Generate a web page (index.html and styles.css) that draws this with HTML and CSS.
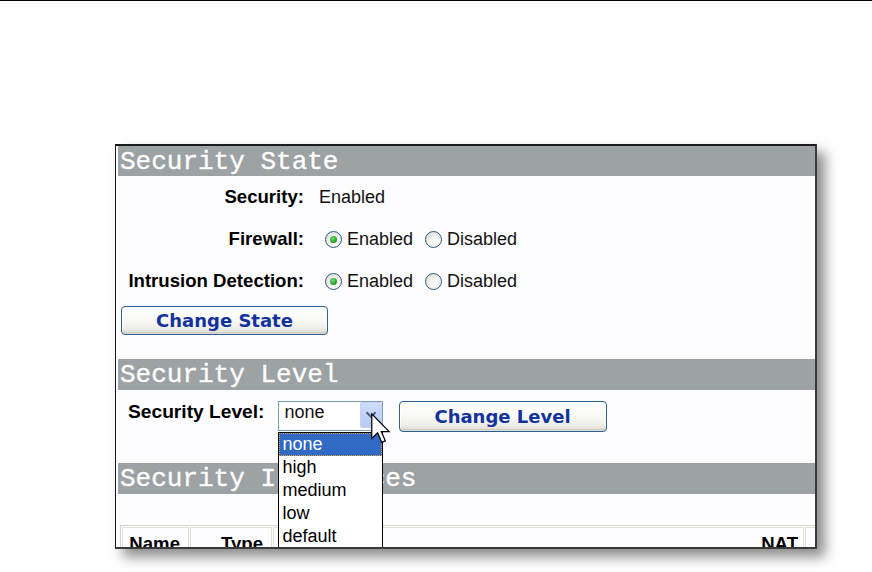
FILE: index.html
```html
<!DOCTYPE html>
<html>
<head>
<meta charset="utf-8">
<title>Security</title>
<link rel="stylesheet" href="styles.css">
</head>
<body>
<div class="topline"></div>
<div class="frame">
  <div class="sect-head">Security State</div>
  <div class="state-grid">
    <div class="lbl">Security:</div>
    <div class="val">Enabled</div>
    <div class="lbl">Firewall:</div>
    <div class="val"><span class="radio on"></span>Enabled<span class="radio second"></span>Disabled</div>
    <div class="lbl">Intrusion Detection:</div>
    <div class="val"><span class="radio on"></span>Enabled<span class="radio second"></span>Disabled</div>
  </div>
  <div class="btn-row"><button class="btn btn-state">Change State</button></div>

  <div class="sect-head h2">Security Level</div>
  <div class="level-row">
    <span class="lbl level-lbl">Security Level:</span>
    <div class="select-wrap">
      <div class="select">none<span class="arrow"><svg width="22" height="26" viewBox="0 0 22 26"><path d="M6 10 L11 15 L16 10" fill="none" stroke="#4d6185" stroke-width="2.4"/></svg></span></div>
      <ul class="dropdown">
        <li class="sel">none</li>
        <li>high</li>
        <li>medium</li>
        <li>low</li>
        <li>default</li>
      </ul>
    </div>
    <button class="btn btn-level">Change Level</button>
  </div>

  <div class="sect-head h3">Security Interfaces</div>
  <table class="ifaces">
    <tr>
      <th class="c-name">Name</th>
      <th class="c-type">Type</th>
      <th class="c-nat">NAT</th>
      <th class="c-last">&nbsp;</th>
    </tr>
    <tr><td>lan</td><td>internal</td><td>yes</td><td></td></tr>
  </table>
</div>
<svg class="cursor" width="20" height="31" viewBox="0 0 13 20"><path d="M0.5 0.5 L0.5 16.5 L4.3 12.8 L7 19 L9.3 18 L6.7 12 L11.8 12 Z" fill="#fff" stroke="#000" stroke-width="0.8" stroke-linejoin="miter"/></svg>
</body>
</html>
```
FILE: styles.css
```css
html, body {
  margin: 0;
  padding: 0;
  background: #fff;
}
body {
  width: 872px;
  height: 572px;
  position: relative;
  overflow: hidden;
  font-family: "Liberation Sans", Arial, sans-serif;
}
.topline {
  height: 1px;
  background: #000;
}
.frame {
  position: relative;
  box-sizing: border-box;
  margin: 143px 0 0 115px;
  width: 702px;
  height: 405px;
  border-top: 2px solid #1a1a1a;
  border-left: 1px solid #1a1a1a;
  border-right: 2px solid #3a3a3a;
  border-bottom: 2px solid #3a3a3a;
  background: #fdfcff;
  box-shadow: 8px 8px 12px rgba(0, 0, 0, 0.45);
  overflow: hidden;
}
.sect-head {
  height: 30px;
  margin-left: 2px;
  padding-left: 2px;
  background: #9da2a5;
  color: #fff;
  font-family: "Liberation Mono", "Courier New", monospace;
  font-size: 26px;
  line-height: 32px;
  white-space: nowrap;
  overflow: hidden;
  -webkit-text-stroke: 0.5px #fff;
  text-shadow: 0 0 1px rgba(90, 95, 98, 0.7);
}
.sect-head.h2 {
  height: 31px;
  margin-top: 24px;
}
.sect-head.h3 {
  height: 31px;
  margin-top: 31px;
}
.state-grid {
  display: grid;
  grid-template-columns: 188px auto;
  grid-auto-rows: 42px;
  column-gap: 15px;
  align-items: center;
}
.lbl {
  font-weight: bold;
  font-size: 18.6px;
  color: #000;
  text-align: right;
  white-space: nowrap;
}
.val {
  font-size: 18px;
  color: #111;
  display: flex;
  align-items: center;
  white-space: nowrap;
}
.radio {
  display: inline-block;
  box-sizing: border-box;
  width: 17px;
  height: 17px;
  margin: 0 5px 0 6px;
  border-radius: 50%;
  border: 1px solid #2a5a86;
  background: radial-gradient(circle at 65% 70%, #ffffff 0%, #f2f1ec 45%, #d6d4cb 100%);
  position: relative;
}
.radio.second {
  margin-left: 12px;
}
.radio.on::after {
  content: "";
  position: absolute;
  left: 4px;
  top: 4px;
  width: 7px;
  height: 7px;
  border-radius: 50%;
  background: radial-gradient(circle at 40% 35%, #7be07b 0%, #2aa52a 55%, #17811a 100%);
}
.btn-row {
  margin: 4px 0 0 5px;
  height: 29px;
}
.btn {
  box-sizing: border-box;
  display: block;
  border: 1px solid #2f5f93;
  border-radius: 4px;
  background: linear-gradient(#ffffff 0%, #fbfbf9 40%, #f1f0ea 75%, #dcdad1 100%);
  box-shadow: inset 0 -2px 0 rgba(200, 198, 186, 0.6), inset 0 0 0 1px rgba(255, 255, 255, 0.8);
  font-family: "DejaVu Sans", Verdana, sans-serif;
  font-weight: bold;
  font-size: 18px;
  color: #12339b;
  padding: 0;
  cursor: default;
}
.btn-state {
  width: 207px;
  height: 29px;
}
.level-row {
  display: flex;
  align-items: flex-start;
  margin-top: 11px;
  height: 31px;
}
.level-lbl {
  margin-left: 12px;
  line-height: 21px;
  margin-right: 13px;
  font-size: 19.2px;
}
.select-wrap {
  position: relative;
  width: 105px;
}
.select {
  box-sizing: border-box;
  position: relative;
  width: 105px;
  height: 30px;
  border: 1px solid #7f9db9;
  background: #fff;
  font-size: 18px;
  line-height: 20px;
  padding-left: 6px;
  color: #111;
}
.arrow {
  position: absolute;
  right: 0;
  top: 0;
  width: 22px;
  height: 26px;
  border-radius: 2px;
  background: linear-gradient(#cfdcfb, #b6caf5);
  border: 1px solid #c3d3f7;
  box-sizing: border-box;
  display: flex;
  align-items: center;
  justify-content: center;
}
.arrow svg {
  display: block;
}
.dropdown {
  position: absolute;
  left: 0;
  top: 31px;
  box-sizing: border-box;
  width: 105px;
  margin: 0;
  padding: 0;
  list-style: none;
  border: 1px solid #000;
  background: #fff;
  z-index: 5;
}
.dropdown li {
  height: 23px;
  line-height: 23px;
  font-size: 18px;
  padding-left: 4px;
  color: #000;
}
.dropdown li.sel {
  background: #316ac5;
  color: #fff;
  outline: 1px dotted #e2a33a;
  outline-offset: -1px;
}
.btn-level {
  width: 208px;
  height: 31px;
  margin-left: 16px;
}
.ifaces {
  margin: 31px 0 0 4px;
  width: 710px;
  border: 1px solid #d9d5c8;
  border-spacing: 1px;
}
.ifaces th,
.ifaces td {
  border: 1px solid #e3e0d4;
  font-size: 18.6px;
  line-height: 21px;
  text-align: right;
  padding: 5px 8px 5px 6px;
  white-space: nowrap;
}
.ifaces th {
  font-weight: bold;
  color: #000;
}
.ifaces th.c-nat {
  padding-right: 5px;
}
.c-name { width: 51px; }
.c-type { width: 66px; }
.c-nat { width: 518px; }
.cursor {
  position: absolute;
  left: 371px;
  top: 413px;
  z-index: 10;
}
```
